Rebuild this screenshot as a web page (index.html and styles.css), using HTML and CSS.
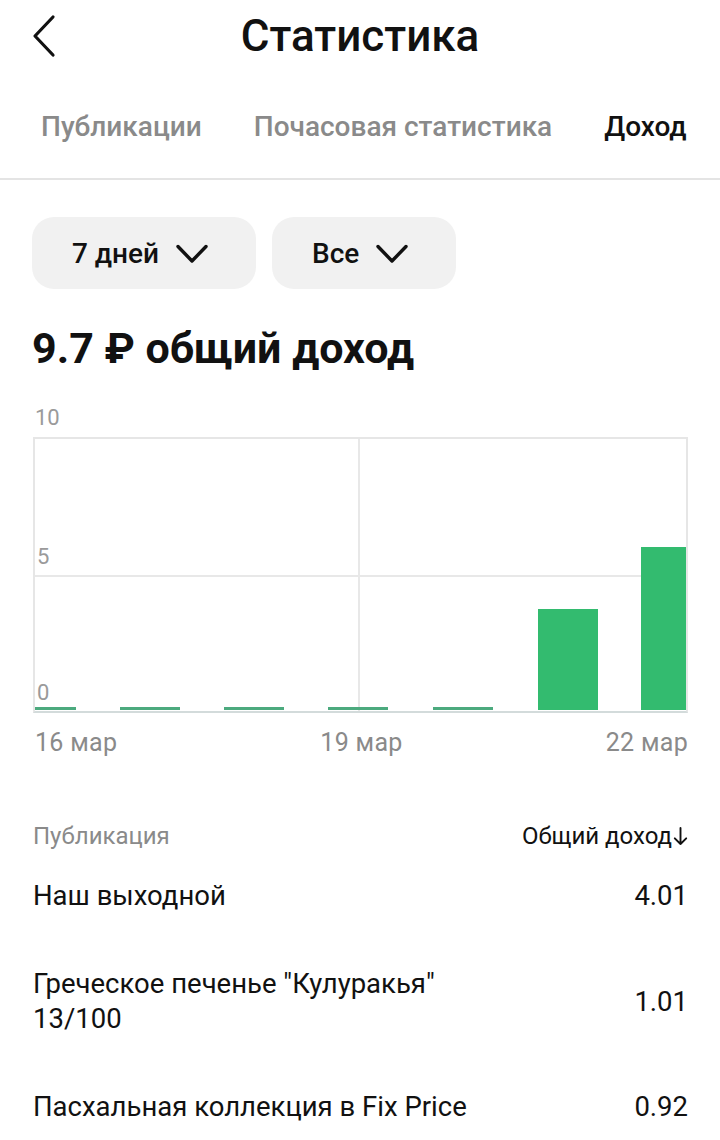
FILE: index.html
```html
<!DOCTYPE html>
<html lang="ru">
<head>
<meta charset="utf-8">
<link rel="stylesheet" href="styles.css">
</head>
<body>
<div class="page">
  <header class="topbar">
    <div class="back">
      <svg width="26" height="44" viewBox="0 0 26 44"><path d="M22 3 L4 22 L22 41" fill="none" stroke="#111" stroke-width="3.2" stroke-linecap="round" stroke-linejoin="round"/></svg>
    </div>
    <h1 class="title">Статистика</h1>
    <div></div>
  </header>
  <nav class="tabs">
    <span class="tab">Публикации</span>
    <span class="tab">Почасовая статистика</span>
    <span class="tab active">Доход</span>
  </nav>
  <div class="filters">
    <div class="chip"><span>7 дней</span><svg class="chev" width="34" height="22" viewBox="0 0 34 22"><path d="M3 3.5 L17 18 L31 3.5" fill="none" stroke="#111" stroke-width="3.4" stroke-linecap="round" stroke-linejoin="round"/></svg></div>
    <div class="chip"><span>Все</span><svg class="chev" width="34" height="22" viewBox="0 0 34 22"><path d="M3 3.5 L17 18 L31 3.5" fill="none" stroke="#111" stroke-width="3.4" stroke-linecap="round" stroke-linejoin="round"/></svg></div>
  </div>
  <h2 class="total">9.7 ₽ общий доход</h2>
  <div class="chart-wrap">
    <div class="ylabel top">10</div>
    <div class="chart">
      <div class="grid-h"></div>
      <div class="grid-v"></div>
      <div class="ylabel mid">5</div>
      <div class="ylabel zero">0</div>
      <div class="bar thin" style="left:-19px"></div>
      <div class="bar thin" style="left:85px"></div>
      <div class="bar thin" style="left:189px"></div>
      <div class="bar thin" style="left:293px"></div>
      <div class="bar thin" style="left:398px"></div>
      <div class="bar" style="left:503px;height:101px"></div>
      <div class="bar" style="left:606px;height:163px"></div>
    </div>
    <div class="xlabels">
      <span>16 мар</span>
      <span>19 мар</span>
      <span>22 мар</span>
    </div>
  </div>
  <section class="table">
    <div class="thead">
      <span class="th-left">Публикация</span>
      <span class="th-right">Общий доход<svg class="arrow" width="15" height="22" viewBox="0 0 15 22"><path d="M7.5 3 V19 M1.8 13.3 L7.5 19 L13.2 13.3" fill="none" stroke="#111" stroke-width="1.9" stroke-linecap="round" stroke-linejoin="round"/></svg></span>
    </div>
    <div class="row r1">
      <span class="name">Наш выходной</span>
      <span class="val">4.01</span>
    </div>
    <div class="row r2">
      <span class="name">Греческое печенье "Кулуракья"<br>13/100</span>
      <span class="val">1.01</span>
    </div>
    <div class="row r3">
      <span class="name">Пасхальная коллекция в Fix Price</span>
      <span class="val">0.92</span>
    </div>
  </section>
</div>
</body>
</html>
```
FILE: styles.css
```css
* { box-sizing: border-box; margin: 0; padding: 0; }
html, body { background: #fff; }
body { font-family: "Roboto", "Noto Sans", sans-serif; color: #111; overflow: hidden; }
.page { width: 720px; height: 1140px; }

.topbar {
  display: grid;
  grid-template-columns: 1fr auto 1fr;
  align-items: center;
  height: 72px;
  padding: 0 31px;
}
.back { display: flex; align-items: center; }
.back svg { display: block; }
.title { font-size: 44px; font-weight: 500; line-height: 72px; }

.tabs {
  display: flex;
  gap: 52px;
  padding: 38px 0 0 41px;
  height: 108px;
  border-bottom: 2px solid #e4e4e4;
  font-size: 28px;
  font-weight: 500;
  line-height: 34px;
}
.tab { color: #8a8a8a; }
.tab.active { color: #111; }

.filters { display: flex; gap: 16px; padding: 37px 0 0 32px; }
.chip {
  height: 72px;
  background: #f1f1f1;
  border-radius: 22px;
  display: flex;
  align-items: center;
  gap: 16px;
  padding: 0 47px 0 40px;
  font-size: 28px;
  font-weight: 500;
}
.chev { display: block; margin-top: 2px; }

.total { font-size: 43px; font-weight: 700; line-height: 52px; padding: 33px 0 0 32px; }

.chart-wrap { padding: 31px 32px 0 33px; }
.ylabel { font-size: 22px; color: #9a9a9a; line-height: 26px; }
.ylabel.top { padding-left: 2px; margin-bottom: 6px; }
.chart {
  position: relative;
  height: 276px;
  border: 2px solid #e6e6e6;
  border-bottom-color: #d3dbdb;
  overflow: hidden;
}
.grid-h { position: absolute; left: 0; right: 0; top: 136px; height: 2px; background: #e8e8e8; }
.grid-v { position: absolute; top: 0; bottom: 0; left: 323px; width: 2px; background: #e8e8e8; }
.ylabel.mid { position: absolute; left: 2px; top: 105px; }
.ylabel.zero { position: absolute; left: 2px; top: 241px; }
.bar { position: absolute; bottom: 1px; width: 60px; background: #33bb6f; }
.bar.thin { height: 3px; background: #4caa7e; }

.xlabels {
  display: flex;
  justify-content: space-between;
  font-size: 25px;
  letter-spacing: 0.3px;
  color: #8a8a8a;
  padding: 15px 0 0 2px;
  line-height: 29px;
}

.table { padding: 64px 32px 0 33px; }
.thead { display: flex; justify-content: space-between; align-items: center; font-size: 24px; line-height: 30px; }
.th-left { color: #8a8a8a; }
.th-right { color: #111; display: flex; align-items: center; }
.arrow { display: block; margin-left: 1px; }
.row { display: flex; justify-content: space-between; align-items: center; font-size: 27.5px; line-height: 35px; }
.row .val { text-align: right; }
.r1 { margin-top: 27px; }
.r2 { margin-top: 53px; }
.r3 { margin-top: 53px; }
```
